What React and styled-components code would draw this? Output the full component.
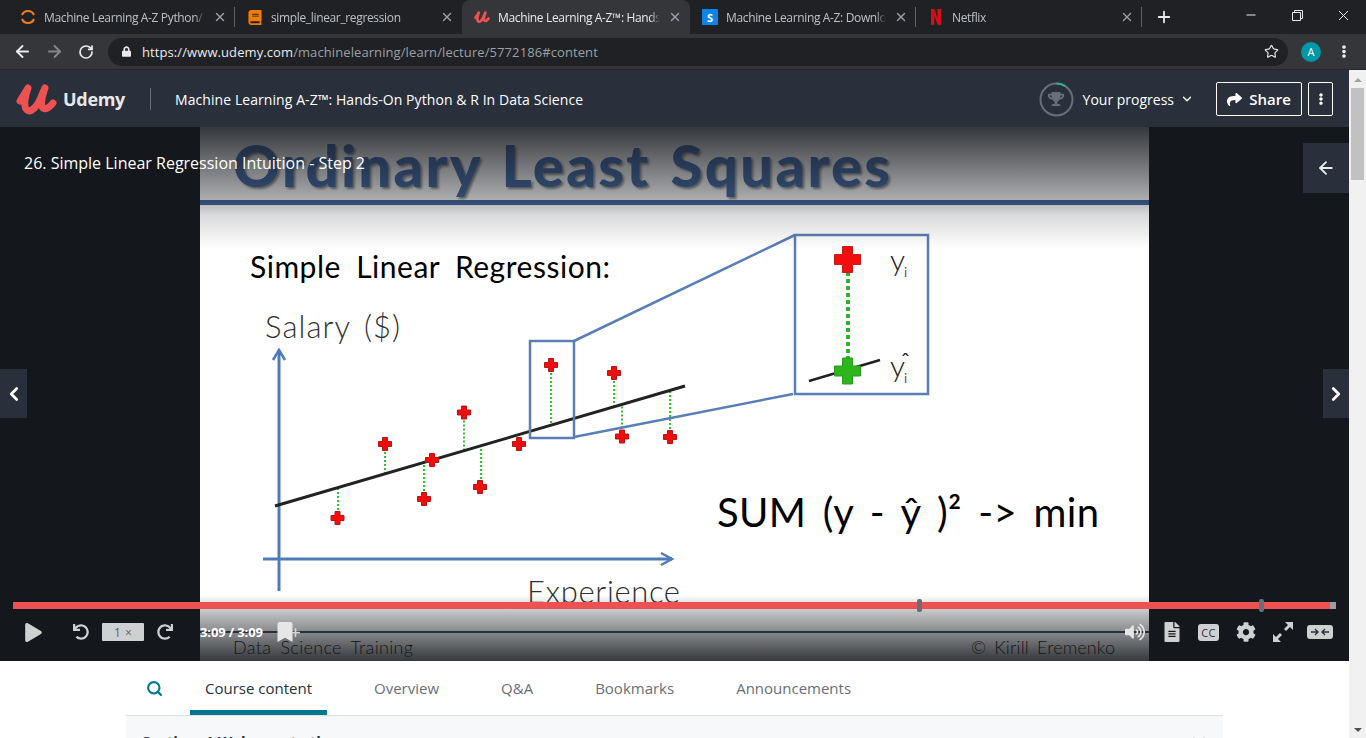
import React from "react";
import styled, { createGlobalStyle } from "styled-components";
import {
  ArrowLeft,
  ArrowRight,
  RotateCw,
  Star,
  X,
  Plus,
  Minus,
  Search,
  ChevronDown,
  ChevronLeft,
  ChevronRight,
} from "lucide-react";
import {
  FaPlay,
  FaShare,
  FaTrophy,
  FaCog,
  FaVolumeUp,
  FaFileAlt,
  FaBook,
  FaLock,
  FaUndo,
  FaRedo,
  FaBookmark,
  FaEllipsisV,
} from "react-icons/fa";

const GlobalStyle = createGlobalStyle`
  html, body {
    margin: 0;
    height: 100%;
    overflow: hidden;
    background: #fff;
  }
  body {
    font-family: "Open Sans", "Noto Sans", sans-serif;
  }
`;

const Shell = styled.div`
  width: 1366px;
  height: 738px;
  display: flex;
  flex-direction: column;
  overflow: hidden;
`;

/* browser chrome */
const TabStrip = styled.div`
  height: 34px;
  flex: none;
  background: #202124;
  display: flex;
  align-items: stretch;
  padding-left: 8px;
`;

const Tab = styled.div`
  width: ${(p) => p.$width}px;
  flex: none;
  box-sizing: border-box;
  display: flex;
  align-items: center;
  gap: 8px;
  padding: 0 8px 0 12px;
  color: ${(p) => (p.$active ? "#e8eaed" : "#bdc1c6")};
  background: ${(p) => (p.$active ? "#35363a" : "transparent")};
  border-radius: ${(p) => (p.$active ? "8px 8px 0 0" : "0")};
  position: relative;
  &::after {
    content: "";
    display: ${(p) => (p.$divider ? "block" : "none")};
    position: absolute;
    right: 0;
    top: 7px;
    bottom: 7px;
    width: 1px;
    background: #5f6368;
  }
`;

const TabTitle = styled.span`
  flex: 1;
  min-width: 0;
  font-size: 12px;
  letter-spacing: -0.35px;
  white-space: nowrap;
  overflow: hidden;
  mask-image: linear-gradient(to left, transparent 0, #000 10px);
`;

const TabClose = styled(X)`
  width: 14px;
  height: 14px;
  flex: none;
  color: #9aa0a6;
  stroke-width: 2.4;
`;

const Favicon = styled.svg`
  width: 16px;
  height: 16px;
  flex: none;
`;

const BookIcon = styled(FaBook)`
  width: 14px;
  height: 15px;
  margin: 0 1px;
  flex: none;
  color: #f57c00;
`;

const SiteBadge = styled.span`
  width: 16px;
  height: 16px;
  flex: none;
  background: #0a84e8;
  color: #fff;
  font-size: 11px;
  font-weight: 700;
  display: flex;
  align-items: center;
  justify-content: center;
`;

const NewTab = styled(Plus)`
  width: 18px;
  height: 18px;
  margin-left: 13px;
  align-self: center;
  color: #e8eaed;
  stroke-width: 2.4;
`;

const WindowControls = styled.div`
  margin-left: auto;
  display: flex;
  align-items: center;
  height: 30px;
  color: #e8eaed;
`;

const WindowButton = styled.div`
  width: 46px;
  height: 30px;
  display: flex;
  align-items: center;
  justify-content: center;
`;

const Toolbar = styled.div`
  height: 36px;
  flex: none;
  box-sizing: border-box;
  background: #35363a;
  border-bottom: 1px solid #26272a;
  display: flex;
  align-items: center;
  padding-left: 12px;
`;

const NavIcon = styled.div`
  width: 20px;
  height: 20px;
  margin-right: 12px;
  display: flex;
  align-items: center;
  justify-content: center;
  color: ${(p) => (p.$muted ? "#85878b" : "#e8eaed")};
`;

const Omnibox = styled.div`
  width: 1180px;
  height: 28px;
  box-sizing: border-box;
  background: #202124;
  border-radius: 14px;
  display: flex;
  align-items: center;
  padding: 0 9px 0 14px;
`;

const LockIcon = styled(FaLock)`
  width: 9px;
  height: 11px;
  color: #e8eaed;
  margin-right: 11px;
`;

const Url = styled.div`
  flex: 1;
  font-size: 13px;
  letter-spacing: 0.09px;
  color: #9aa0a6;
  white-space: nowrap;
`;

const UrlHost = styled.span`
  color: #e8eaed;
`;

const Avatar = styled.div`
  width: 20px;
  height: 20px;
  border-radius: 50%;
  background: #0097a7;
  color: #fff;
  font-size: 11px;
  display: flex;
  align-items: center;
  justify-content: center;
  margin-left: 13px;
`;

const MenuDots = styled(FaEllipsisV)`
  width: 14px;
  height: 13px;
  margin-left: 16px;
  color: #e8eaed;
`;

/* page */
const PageRow = styled.div`
  flex: 1;
  min-height: 0;
  display: flex;
`;

const Page = styled.div`
  width: 1349px;
  flex: none;
  display: flex;
  flex-direction: column;
  overflow: hidden;
`;

const Scrollbar = styled.div`
  width: 17px;
  flex: none;
  background: #f1f1f1;
  display: flex;
  flex-direction: column;
  align-items: center;
  justify-content: space-between;
  padding: 8px 0 6px;
  box-sizing: border-box;
`;

const ScrollUpper = styled.div`
  display: flex;
  flex-direction: column;
  align-items: center;
`;

const ScrollArrow = styled.div`
  width: 0;
  height: 0;
  border-left: 4px solid transparent;
  border-right: 4px solid transparent;
  ${(p) =>
    p.$down ? "border-top: 4px solid #505050;" : "border-bottom: 4px solid #a3a3a3;"}
`;

const ScrollThumb = styled.div`
  width: 13px;
  height: 92px;
  margin-top: 6px;
  background: #c1c1c1;
`;

const CourseHeader = styled.header`
  height: 57px;
  flex: none;
  box-sizing: border-box;
  background: #29303b;
  color: #fff;
  display: flex;
  align-items: center;
  padding: 1px 16px 0;
`;

const Logo = styled.div`
  display: flex;
  align-items: center;
  gap: 6px;
`;

const LogoMark = styled.svg`
  width: 41px;
  height: 34px;
`;

const LogoText = styled.span`
  font-size: 18px;
  font-weight: 700;
  letter-spacing: -0.3px;
  color: #e8e9eb;
`;

const HeaderDivider = styled.div`
  width: 1px;
  height: 22px;
  background: #686f7a;
  margin: 0 24px 0 25px;
`;

const CourseTitle = styled.div`
  font-size: 14px;
  font-weight: 500;
  letter-spacing: 0.07px;
  white-space: nowrap;
`;

const HeaderRight = styled.div`
  margin-left: auto;
  display: flex;
  align-items: center;
`;

const ProgressRing = styled.div`
  width: 35px;
  height: 35px;
  position: relative;
  display: flex;
  align-items: center;
  justify-content: center;
  color: #686f7a;
  margin-right: 9px;
`;

const RingArt = styled.svg`
  position: absolute;
  inset: 0;
`;

const ProgressLabel = styled.div`
  font-size: 14px;
  font-weight: 500;
  white-space: nowrap;
`;

const ProgressCaret = styled(ChevronDown)`
  width: 14px;
  height: 14px;
  margin: 0 22px 0 6px;
  stroke-width: 2.2;
`;

const OutlineButton = styled.button`
  height: 34px;
  width: ${(p) => p.$width}px;
  margin-left: ${(p) => p.$gap || 0}px;
  box-sizing: border-box;
  background: transparent;
  border: 1px solid #fff;
  border-radius: 2px;
  color: #fff;
  font: 600 15px "Open Sans", sans-serif;
  display: flex;
  align-items: center;
  justify-content: center;
  gap: 7px;
  padding: 0;
`;

/* video stage */
const Stage = styled.section`
  height: 534px;
  flex: none;
  position: relative;
  background: #14171c;
  display: flex;
  justify-content: center;
  overflow: hidden;
`;

const Slide = styled.div`
  width: 949px;
  height: 534px;
  position: relative;
  background: #fff;
`;

const SlideArt = styled.svg`
  display: block;
`;

const SlideText = styled.text`
  font-family: "Lato", "Open Sans", sans-serif;
  font-size: ${(p) => p.$size}px;
  font-weight: ${(p) => p.$weight || 400};
  word-spacing: ${(p) => p.$words || 0}px;
  fill: ${(p) => p.$color || "#000"};
`;

const SlideHeading = styled(SlideText)`
  filter: drop-shadow(2px 2px 1px rgba(0, 0, 0, 0.45));
`;

const SlideShadeTop = styled.div`
  position: absolute;
  top: 0;
  left: 0;
  right: 0;
  height: 122px;
  background: linear-gradient(
    to bottom,
    rgba(20, 23, 28, 0.86) 0,
    rgba(20, 23, 28, 0.36) 72px,
    rgba(20, 23, 28, 0.16) 88px,
    rgba(20, 23, 28, 0) 100%
  );
`;

const SlideShadeBottom = styled.div`
  position: absolute;
  bottom: 0;
  left: 0;
  right: 0;
  height: 66px;
  background: linear-gradient(
    to bottom,
    rgba(20, 23, 28, 0) 0,
    rgba(20, 23, 28, 0.28) 18px,
    rgba(20, 23, 28, 0.86) 100%
  );
`;

const LectureTitle = styled.div`
  position: absolute;
  left: 24px;
  top: 26px;
  font-size: 16px;
  font-weight: 500;
  line-height: 20px;
  color: #fff;
`;

const SidebarToggle = styled.div`
  position: absolute;
  right: 0;
  top: 16px;
  width: 46px;
  height: 50px;
  background: #29303b;
  color: #e8e9eb;
  display: flex;
  align-items: center;
  justify-content: center;
`;

const LectureNav = styled.div`
  position: absolute;
  top: 242px;
  ${(p) => (p.$side === "left" ? "left: 0;" : "right: 0;")}
  width: ${(p) => (p.$side === "left" ? 27 : 26)}px;
  height: 49px;
  background: #29303b;
  color: #fff;
  display: flex;
  align-items: center;
  justify-content: center;
`;

const ControlBar = styled.div`
  position: absolute;
  left: 0;
  right: 0;
  bottom: 0;
  height: 62px;
`;

const ProgressTrack = styled.div`
  position: absolute;
  left: 13px;
  top: 3px;
  width: 1323px;
  height: 7px;
  background: #9a9ca0;
`;

const ProgressFill = styled.div`
  height: 100%;
  width: 1317px;
  background: #ec5252;
`;

const ChapterMark = styled.div`
  position: absolute;
  top: -3px;
  left: ${(p) => p.$at}px;
  width: 5px;
  height: 13px;
  border-radius: 2px;
  background: #686f7a;
`;

const ControlRow = styled.div`
  position: absolute;
  left: 0;
  right: 0;
  top: 19px;
  height: 28px;
  display: flex;
  align-items: center;
  color: #cfd0d2;
`;

const ControlsLeft = styled.div`
  width: 200px;
  flex: none;
  box-sizing: border-box;
  padding-left: 25px;
  display: flex;
  align-items: center;
`;

const PlayIcon = styled(FaPlay)`
  width: 17px;
  height: 19px;
  margin-right: 31px;
`;

const SkipIcon = styled.span`
  display: flex;
  margin: 0 ${(p) => p.$right || 0}px 0 ${(p) => p.$left || 0}px;
  font-size: 16px;
`;

const RateBox = styled.div`
  width: 42px;
  height: 18px;
  border-radius: 1px;
  background: #cfd0d2;
  color: #585e68;
  font-size: 12px;
  word-spacing: 1px;
  display: flex;
  align-items: center;
  justify-content: center;
`;

const Timeline = styled.div`
  flex: 1;
  height: 28px;
  display: flex;
  align-items: center;
  background: linear-gradient(#29303b, #29303b) center / 100% 2px no-repeat;
`;

const TimeText = styled.div`
  font-size: 13px;
  font-weight: 700;
  letter-spacing: -0.12px;
  color: #fff;
  white-space: nowrap;
`;

const BookmarkAdd = styled.div`
  margin-left: 12px;
  display: flex;
  align-items: center;
  color: #e6e6e6;
  font-size: 20px;
`;

const BookmarkPlus = styled(Plus)`
  width: 13px;
  height: 13px;
  margin-left: -6px;
  stroke-width: 3;
  color: #d6d6d6;
`;

const VolumeIcon = styled(FaVolumeUp)`
  margin-left: auto;
  margin-right: 4px;
  font-size: 20px;
  color: #e6e6e6;
`;

const ControlsRight = styled.div`
  width: 200px;
  flex: none;
  box-sizing: border-box;
  padding-left: 4px;
  display: flex;
  align-items: center;
`;

const ControlSlot = styled.div`
  width: 37px;
  flex: none;
  display: flex;
  align-items: center;
  justify-content: center;
  font-size: ${(p) => p.$size || 20}px;
`;

const CaptionBadge = styled.div`
  width: 21px;
  height: 17px;
  border-radius: 3px;
  background: #cfd0d2;
  color: #29303b;
  font-size: 11px;
  font-weight: 500;
  letter-spacing: 0.3px;
  display: flex;
  align-items: center;
  justify-content: center;
`;

const CollapseBadge = styled.div`
  width: 26px;
  height: 14px;
  border-radius: 3px;
  background: #cfd0d2;
  display: flex;
  align-items: center;
  justify-content: center;
`;

/* course tabs */
const Content = styled.div`
  width: 1097px;
  margin: 0 auto;
  flex: 1;
  display: flex;
  flex-direction: column;
  min-height: 0;
`;

const TabBar = styled.nav`
  height: 55px;
  flex: none;
  box-sizing: border-box;
  border-bottom: 1px solid #dedfe0;
  display: flex;
  align-items: stretch;
`;

const SearchButton = styled.div`
  width: 64px;
  flex: none;
  box-sizing: border-box;
  display: flex;
  align-items: center;
  justify-content: center;
  padding: 0 8px 0 0;
  color: #007791;
`;

const CourseTab = styled.div`
  padding: 5px 15px 0;
  margin-right: 32px;
  height: 54px;
  box-sizing: border-box;
  display: flex;
  align-items: center;
  font-size: 15px;
  color: ${(p) => (p.$active ? "#29303b" : "#686f7a")};
  border-bottom: 5px solid ${(p) => (p.$active ? "#007791" : "transparent")};
`;

const SectionRow = styled.div`
  flex: 1;
  background: #f7f8fa;
  display: flex;
  justify-content: space-between;
  padding: 15px 14px 0 16px;
`;

const SectionTitle = styled.div`
  font-size: 15px;
  font-weight: 700;
  color: #29303b;
  white-space: nowrap;
`;

const SectionCaret = styled(ChevronDown)`
  width: 20px;
  height: 20px;
  color: #29303b;
  flex: none;
`;

const UdemyPath = ({ width }) => (
  <path
    d="M4 19 L12 6 C9 14 7 25 11 28 C15 31 21 25 25 15 L29 6 C26 15 24 24 27 26 C30 28 34 25 37 21"
    fill="none"
    stroke="#ec5252"
    strokeWidth={width}
    strokeLinecap="round"
    strokeLinejoin="round"
  />
);

const browserTabs = [
  {
    title: "Machine Learning A-Z Python/",
    width: 227,
    divider: true,
    icon: (
      <Favicon viewBox="0 0 16 16">
        <path d="M2 6 A6.5 6.5 0 0 1 14 6" fill="none" stroke="#f57c20" strokeWidth="2" />
        <path d="M2 10 A6.5 6.5 0 0 0 14 10" fill="none" stroke="#f57c20" strokeWidth="2" />
      </Favicon>
    ),
  },
  { title: "simple_linear_regression", width: 227, icon: <BookIcon /> },
  {
    title: "Machine Learning A-Z™: Hands-On Python",
    width: 228,
    active: true,
    icon: (
      <Favicon viewBox="0 0 41 34">
        <UdemyPath width={7} />
      </Favicon>
    ),
  },
  {
    title: "Machine Learning A-Z: Download",
    width: 226,
    divider: true,
    icon: <SiteBadge>S</SiteBadge>,
  },
  {
    title: "Netflix",
    width: 226,
    divider: true,
    icon: (
      <Favicon viewBox="0 0 16 16">
        <path d="M3 0h3.4l3 9V0H13v16l-3.4-.5L6.4 7v8.6L3 16z" fill="#d50f18" />
      </Favicon>
    ),
  },
];

const courseTabs = ["Course content", "Overview", "Q&A", "Bookmarks", "Announcements"];

const lineY = (x) => 506 - ((x - 275) * 120) / 410;

// slide points in page coordinates: [cross x, cross y, dotted line x]
const points = [
  [337.5, 518, 338],
  [385, 444, 385],
  [432, 460, null],
  [424, 499, 424],
  [464, 412.5, 464],
  [480, 487, 481],
  [519, 444, null],
  [622, 436.5, 622],
  [670, 437, 670],
  [551, 365, 551],
  [614, 373, 614],
];

const Cross = ({ x, y, r, arm, fill, edge }) => (
  <path
    d={`M${x - arm} ${y - r}h${arm * 2}v${r - arm}h${r - arm}v${arm * 2}h${arm - r}v${r - arm}h${-arm * 2}v${arm - r}h${arm - r}v${-arm * 2}h${r - arm}z`}
    fill={fill}
    stroke={edge}
    strokeWidth="1"
  />
);

const SlideDrawing = () => (
  <SlideArt width="949" height="534" viewBox="200 127 949 534">
    <defs>
      <linearGradient id="headFill" x1="0" y1="0" x2="0" y2="1">
        <stop offset="0" stopColor="#3f6db0" />
        <stop offset="1" stopColor="#41689f" />
      </linearGradient>
    </defs>
    <SlideHeading x="233" y="187" $size="58" $weight="900" $words="4" textLength="657" lengthAdjust="spacing" style={{ fill: "url(#headFill)" }}>
      Ordinary Least Squares
    </SlideHeading>
    <rect x="200" y="200" width="949" height="5" fill="#41659d" />

    <SlideText x="250" y="278" $size="30" $words="7" textLength="360" lengthAdjust="spacing">
      Simple Linear Regression:
    </SlideText>
    <SlideText x="265" y="338" $size="31" $weight="300" $words="4" $color="#303030" textLength="135" lengthAdjust="spacing">
      Salary ($)
    </SlideText>
    <SlideText x="527" y="603" $size="31" $weight="300" $color="#303030" textLength="153" lengthAdjust="spacing">
      Experience
    </SlideText>
    <SlideText x="717" y="527" $size="40" $words="6" textLength="382" lengthAdjust="spacing">
      SUM (y - ŷ )² -&gt; min
    </SlideText>
    <SlideText x="233" y="654" $size="18" $weight="300" $words="4" $color="#111" textLength="180" lengthAdjust="spacing">
      Data Science Training
    </SlideText>
    <SlideText x="971" y="654" $size="18" $weight="300" $words="3" $color="#111" textLength="144" lengthAdjust="spacing">
      © Kirill Eremenko
    </SlideText>

    {/* axes */}
    <g fill="none" stroke="#4f7cb8" strokeWidth="3">
      <path d="M279 591V350" />
      <path d="M273 360l6-10 6 10" strokeWidth="2.5" />
      <path d="M263 559H672" />
      <path d="M661 553l11 6-11 6" strokeWidth="2.5" />
    </g>

    {/* residuals */}
    <g stroke="#39bb3d" strokeWidth="2" strokeDasharray="2 2">
      {points.filter((p) => p[2]).map((p) => (
        <line key={p[2]} x1={p[2]} x2={p[2]} y1={p[1]} y2={lineY(p[2])} />
      ))}
    </g>

    <line x1="275" y1="506" x2="685" y2="386" stroke="#222" strokeWidth="3" />

    {points.map((p) => (
      <Cross key={p[0]} x={p[0]} y={p[1]} r={6.5} arm={2.5} fill="#f00d0d" edge="#b81414" />
    ))}

    {/* zoomed detail */}
    <g fill="none" stroke="#5a7fb5" strokeWidth="2.5">
      <rect x="530" y="341" width="44" height="97" />
      <path d="M574 341L795 235" />
      <path d="M574 437L793 394" />
      <rect x="795" y="235" width="133" height="159" />
    </g>
    <line x1="848" y1="272" x2="848" y2="358" stroke="#33b32d" strokeWidth="4" strokeDasharray="4 3" />
    <line x1="809" y1="381" x2="880" y2="360" stroke="#222" strokeWidth="2.5" />
    <Cross x={847.5} y={259.5} r={13} arm={5} fill="#f40d0d" edge="#c81a1a" />
    <Cross x={847.5} y={371} r={13} arm={5} fill="#2cb61a" edge="#2a9a1e" />
    <SlideText x="890" y="271" $size="30" $weight="300" $color="#222">y</SlideText>
    <SlideText x="904" y="277" $size="13" $color="#555">i</SlideText>
    <SlideText x="890" y="377" $size="30" $weight="300" $color="#222">y</SlideText>
    <SlideText x="904" y="383" $size="13" $color="#555">i</SlideText>
    <SlideText x="901" y="369" $size="22" $color="#222">ˆ</SlideText>
  </SlideArt>
);

const App = () => (
  <Shell>
    <GlobalStyle />
    <TabStrip>
      {browserTabs.map((t) => (
        <Tab key={t.title} $width={t.width} $active={t.active} $divider={t.divider}>
          {t.icon}
          <TabTitle>{t.title}</TabTitle>
          <TabClose />
        </Tab>
      ))}
      <NewTab />
      <WindowControls>
        <WindowButton><Minus size={14} /></WindowButton>
        <WindowButton>
          <svg width="11" height="11" viewBox="0 0 11 11" fill="none" stroke="#e8eaed">
            <path d="M.5 2.5h8v8h-8zM2.5 2.5V.5h8v8h-2" />
          </svg>
        </WindowButton>
        <WindowButton><X size={17} strokeWidth={1.4} /></WindowButton>
      </WindowControls>
    </TabStrip>

    <Toolbar>
      <NavIcon><ArrowLeft size={19} strokeWidth={2.4} /></NavIcon>
      <NavIcon $muted><ArrowRight size={19} strokeWidth={2.4} /></NavIcon>
      <NavIcon><RotateCw size={16} strokeWidth={2.6} /></NavIcon>
      <Omnibox>
        <LockIcon />
        <Url>
          <UrlHost>https://www.udemy.com</UrlHost>/machinelearning/learn/lecture/5772186#content
        </Url>
        <Star size={15} color="#e8eaed" strokeWidth={1.8} />
      </Omnibox>
      <Avatar>A</Avatar>
      <MenuDots />
    </Toolbar>

    <PageRow>
      <Page>
        <CourseHeader>
          <Logo>
            <LogoMark viewBox="0 0 41 34">
              <UdemyPath width={7} />
            </LogoMark>
            <LogoText>Udemy</LogoText>
          </Logo>
          <HeaderDivider />
          <CourseTitle>Machine Learning A-Z™: Hands-On Python &amp; R In Data Science</CourseTitle>
          <HeaderRight>
            <ProgressRing>
              <RingArt width="35" height="35" viewBox="0 0 35 35" fill="none" strokeWidth="2">
                <circle cx="17.5" cy="17.5" r="16" stroke="#686f7a" />
                <path d="M17.5 1.5A16 16 0 0 1 26 4" stroke="#2bb58f" />
              </RingArt>
              <FaTrophy size={16} />
            </ProgressRing>
            <ProgressLabel>Your progress</ProgressLabel>
            <ProgressCaret />
            <OutlineButton $width={86}>
              <FaShare size={15} />
              Share
            </OutlineButton>
            <OutlineButton $width={25} $gap={6}>
              <FaEllipsisV size={12} />
            </OutlineButton>
          </HeaderRight>
        </CourseHeader>

        <Stage>
          <Slide>
            <SlideDrawing />
            <SlideShadeTop />
            <SlideShadeBottom />
          </Slide>
          <LectureTitle>26. Simple Linear Regression Intuition - Step 2</LectureTitle>
          <SidebarToggle><ArrowLeft size={20} strokeWidth={2.2} /></SidebarToggle>
          <LectureNav $side="left"><ChevronLeft size={22} strokeWidth={3} /></LectureNav>
          <LectureNav $side="right"><ChevronRight size={22} strokeWidth={3} /></LectureNav>
          <ControlBar>
            <ProgressTrack>
              <ProgressFill />
              <ChapterMark $at={904} />
              <ChapterMark $at={1246} />
            </ProgressTrack>
            <ControlRow>
              <ControlsLeft>
                <PlayIcon />
                <SkipIcon $right={13}><FaUndo /></SkipIcon>
                <RateBox>1 ×</RateBox>
                <SkipIcon $left={13}><FaRedo /></SkipIcon>
              </ControlsLeft>
              <Timeline>
                <TimeText>3:09 / 3:09</TimeText>
                <BookmarkAdd>
                  <FaBookmark />
                  <BookmarkPlus />
                </BookmarkAdd>
                <VolumeIcon />
              </Timeline>
              <ControlsRight>
                <ControlSlot><FaFileAlt /></ControlSlot>
                <ControlSlot><CaptionBadge>CC</CaptionBadge></ControlSlot>
                <ControlSlot><FaCog /></ControlSlot>
                <ControlSlot>
                  <svg width="22" height="22" viewBox="0 0 22 22" fill="#cfd0d2">
                    <path d="M13 1h8v8l-3-3-4 4-2-2 4-4zM9 21H1v-8l3 3 4-4 2 2-4 4z" />
                  </svg>
                </ControlSlot>
                <ControlSlot>
                  <CollapseBadge>
                    <svg width="20" height="10" viewBox="0 0 20 10" fill="none" stroke="#29303b" strokeWidth="1.4">
                      <path d="M1 5h7M5 2l3 3-3 3M19 5h-7M15 2l-3 3 3 3" />
                    </svg>
                  </CollapseBadge>
                </ControlSlot>
              </ControlsRight>
            </ControlRow>
          </ControlBar>
        </Stage>

        <Content>
          <TabBar>
            <SearchButton><Search size={17} strokeWidth={3} /></SearchButton>
            {courseTabs.map((name, i) => (
              <CourseTab key={name} $active={i === 0}>{name}</CourseTab>
            ))}
          </TabBar>
          <SectionRow>
            <SectionTitle>Section: 1 Welcome to the course</SectionTitle>
            <SectionCaret />
          </SectionRow>
        </Content>
      </Page>
      <Scrollbar>
        <ScrollUpper>
          <ScrollArrow />
          <ScrollThumb />
        </ScrollUpper>
        <ScrollArrow $down />
      </Scrollbar>
    </PageRow>
  </Shell>
);

export default App;
